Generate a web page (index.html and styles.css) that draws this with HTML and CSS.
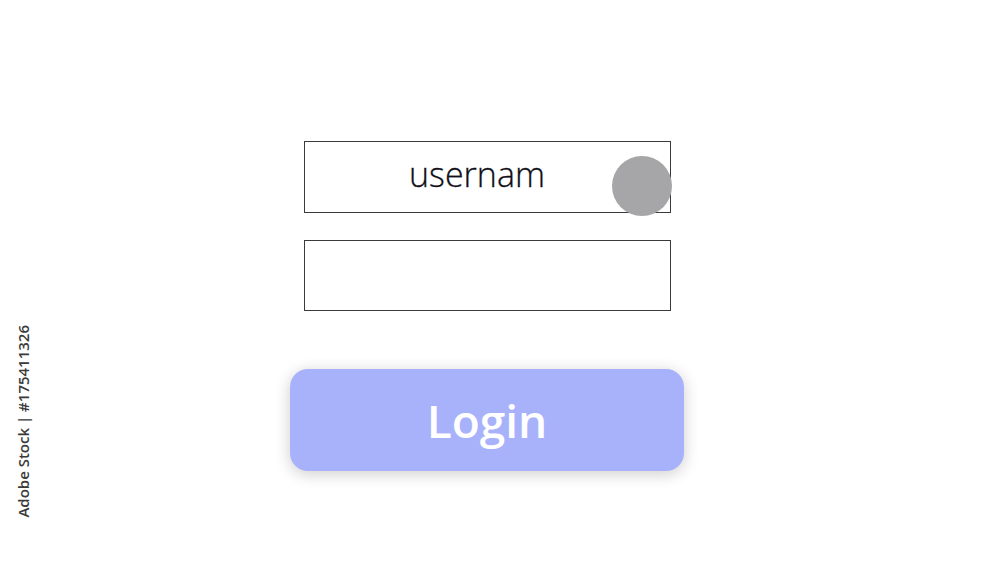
FILE: index.html
```html
<!DOCTYPE html>
<html lang="en">
    <head>
        <meta charset="UTF-8">
        <meta name="viewport" content="width=device-width, initial-scale=1.0">
        <title>Login</title>
        <link rel="stylesheet" href="styles.css">
    </head>
    <body>
        <div class="login-container">
            <div class="field field-user">
                <span class="field-text">usernam</span>
                <span class="touch"></span>
            </div>
            <div class="field field-pass"></div>
            <button class="login">Login</button>
        </div>

        <div class="stock-label">Adobe Stock | #175411326</div>
    </body>
</html>
```

FILE: styles.css
```css
*{
    margin: 0;
    padding: 0;
    box-sizing: border-box;
}

body{
    width: 1000px;
    height: 562px;
    background-color: white;
    overflow: hidden;
    position: relative;
    font-family: "Open Sans", "Noto Sans", sans-serif;
}

.login-container{
    display: flex;
    flex-direction: column;
    align-items: center;
    padding-top: 141px;
    padding-right: 26px;
}

.field{
    width: 367px;
    height: 72px;
    border: 1.5px solid #3a3a3a;
    display: flex;
    align-items: center;
    justify-content: center;
    position: relative;
}

.field-pass{
    margin-top: 27px;
    height: 71px;
}

.field-text{
    font-size: 34px;
    font-weight: 300;
    color: #101018;
    margin-right: 20px;
    margin-top: -6px;
    -webkit-text-stroke: 0.3px #101018;
}

.touch{
    position: absolute;
    right: -2px;
    top: 14px;
    width: 60px;
    height: 60px;
    border-radius: 50%;
    background-color: #a6a6a8;
}

.login{
    margin-top: 58px;
    width: 394px;
    height: 102px;
    border: none;
    border-radius: 18px;
    background-color: #a8b2fa;
    box-shadow: 0 3px 16px rgba(0, 0, 0, 0.2);
    color: white;
    font-family: "Open Sans", "Noto Sans", sans-serif;
    font-size: 46px;
    font-weight: 600;
}

.stock-label{
    position: absolute;
    left: 13px;
    bottom: 44px;
    writing-mode: vertical-rl;
    transform: rotate(180deg);
    font-size: 15px;
    font-weight: 600;
    color: #3a3a3a;
}
```
